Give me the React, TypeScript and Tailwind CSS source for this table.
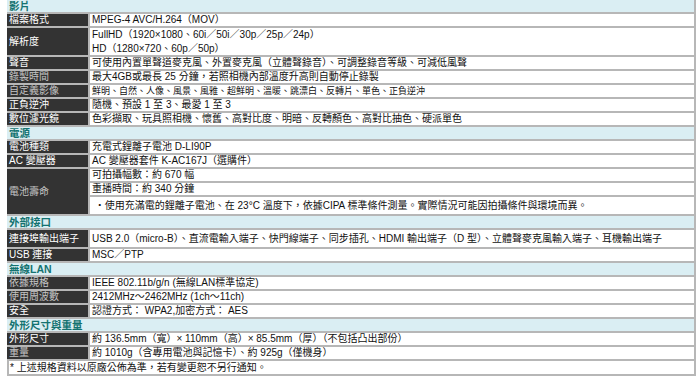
import type { ReactNode } from "react";

const font = "font-['Liberation_Sans','Noto_Sans_CJK_TC',sans-serif]";

function Section({ title }: { title: string }) {
  return (
    <div className="col-span-2 flex h-[12px] items-center bg-[#daeef3] pl-[2px] text-[10.5px] font-bold leading-none text-[#147370]">
      {title}
    </div>
  );
}

function Label({ children, dim, span, h = "h-[12px]" }: { children: ReactNode; dim?: boolean; span?: string; h?: string }) {
  return (
    <div
      className={`flex items-center whitespace-nowrap bg-[#333333] pl-[2px] leading-none ${h} ${span ?? ""} ${
        dim ? "text-[#c4c4c4]" : "text-white"
      }`}
    >
      {children}
    </div>
  );
}

function Value({ children, h = "h-[12px]", small }: { children: ReactNode; h?: string; small?: boolean }) {
  return (
    <div
      className={`flex items-center whitespace-nowrap bg-white pl-[2px] leading-none text-[#111] ${h} ${
        small ? "text-[9px]" : ""
      }`}
    >
      {children}
    </div>
  );
}

export default function App() {
  return (
    <div className={`h-[384px] w-[700px] bg-white ${font} text-[10px]`}>
      <div className="ml-[7px] grid w-[689px] grid-cols-[81px_1fr] gap-[2px] border-r-2 border-b-2 border-[#b7b7b7] bg-[#b7b7b7]">
        {/* 影片 */}
        <Section title="影片" />
        <Label>檔案格式</Label>
        <Value>MPEG-4 AVC/H.264（MOV）</Value>
        <Label h="h-[27px]">解析度</Label>
        <div className="flex h-[27px] flex-col justify-center gap-[4px] bg-white pl-[2px] leading-none text-[#111]">
          <span>FullHD（1920×1080、60i／50i／30p／25p／24p）</span>
          <span>HD（1280×720、60p／50p）</span>
        </div>
        <Label>聲音</Label>
        <Value>可使用內置單聲道麥克風、外置麥克風（立體聲錄音）、可調整錄音等級、可減低風聲</Value>
        <Label dim>錄製時間</Label>
        <Value>最大4GB或最長 25 分鐘，若照相機內部溫度升高則自動停止錄製</Value>
        <Label dim>自定義影像</Label>
        <Value small>鮮明、自然、人像、風景、風雅、超鮮明、溫暖、跳漂白、反轉片、單色、正負逆沖</Value>
        <Label>正負逆沖</Label>
        <Value>隨機、預設 1 至 3、最愛 1 至 3</Value>
        <Label>數位濾光鏡</Label>
        <Value>色彩擷取、玩具照相機、懷舊、高對比度、明暗、反轉顏色、高對比抽色、硬派單色</Value>

        {/* 電源 */}
        <Section title="電源" />
        <Label>電池種類</Label>
        <Value>充電式鋰離子電池 D-LI90P</Value>
        <Label>AC 變壓器</Label>
        <Value>AC 變壓器套件 K-AC167J（選購件）</Value>
        <Label dim span="row-span-3" h="h-auto">
          電池壽命
        </Label>
        <Value>可拍攝幅數：約 670 幅</Value>
        <Value>重播時間：約 340 分鐘</Value>
        <Value h="h-[17px]">
          &nbsp;・使用充滿電的鋰離子電池、在 23°C 溫度下，依據CIPA 標準條件測量。實際情況可能因拍攝條件與環境而異。
        </Value>

        {/* 外部接口 */}
        <Section title="外部接口" />
        <Label h="h-[17px]">連接埠輸出端子</Label>
        <Value h="h-[17px]">
          USB 2.0（micro-B）、直流電輸入端子、快門線端子、同步插孔、HDMI 輸出端子（D 型）、立體聲麥克風輸入端子、耳機輸出端子
        </Value>
        <Label>USB 連接</Label>
        <Value>MSC／PTP</Value>

        {/* 無線LAN */}
        <Section title="無線LAN" />
        <Label dim>依據規格</Label>
        <Value>IEEE 802.11b/g/n (無線LAN標準協定)</Value>
        <Label dim>使用周波數</Label>
        <Value>2412MHz～2462MHz (1ch～11ch)</Value>
        <Label>安全</Label>
        <Value>認證方式： WPA2,加密方式： AES</Value>

        {/* 外形尺寸與重量 */}
        <Section title="外形尺寸與重量" />
        <Label>外形尺寸</Label>
        <Value>約 136.5mm（寬）× 110mm（高）× 85.5mm（厚）（不包括凸出部份）</Value>
        <Label dim>重量</Label>
        <Value>約 1010g（含專用電池與記憶卡）、約 925g（僅機身）</Value>
        <div className="col-span-2 flex h-[13px] items-center border-l-2 border-[#b7b7b7] bg-white pl-[1px] leading-none text-[#111]">
          * 上述規格資料以原廠公佈為準，若有變更恕不另行通知。
        </div>
      </div>
    </div>
  );
}
